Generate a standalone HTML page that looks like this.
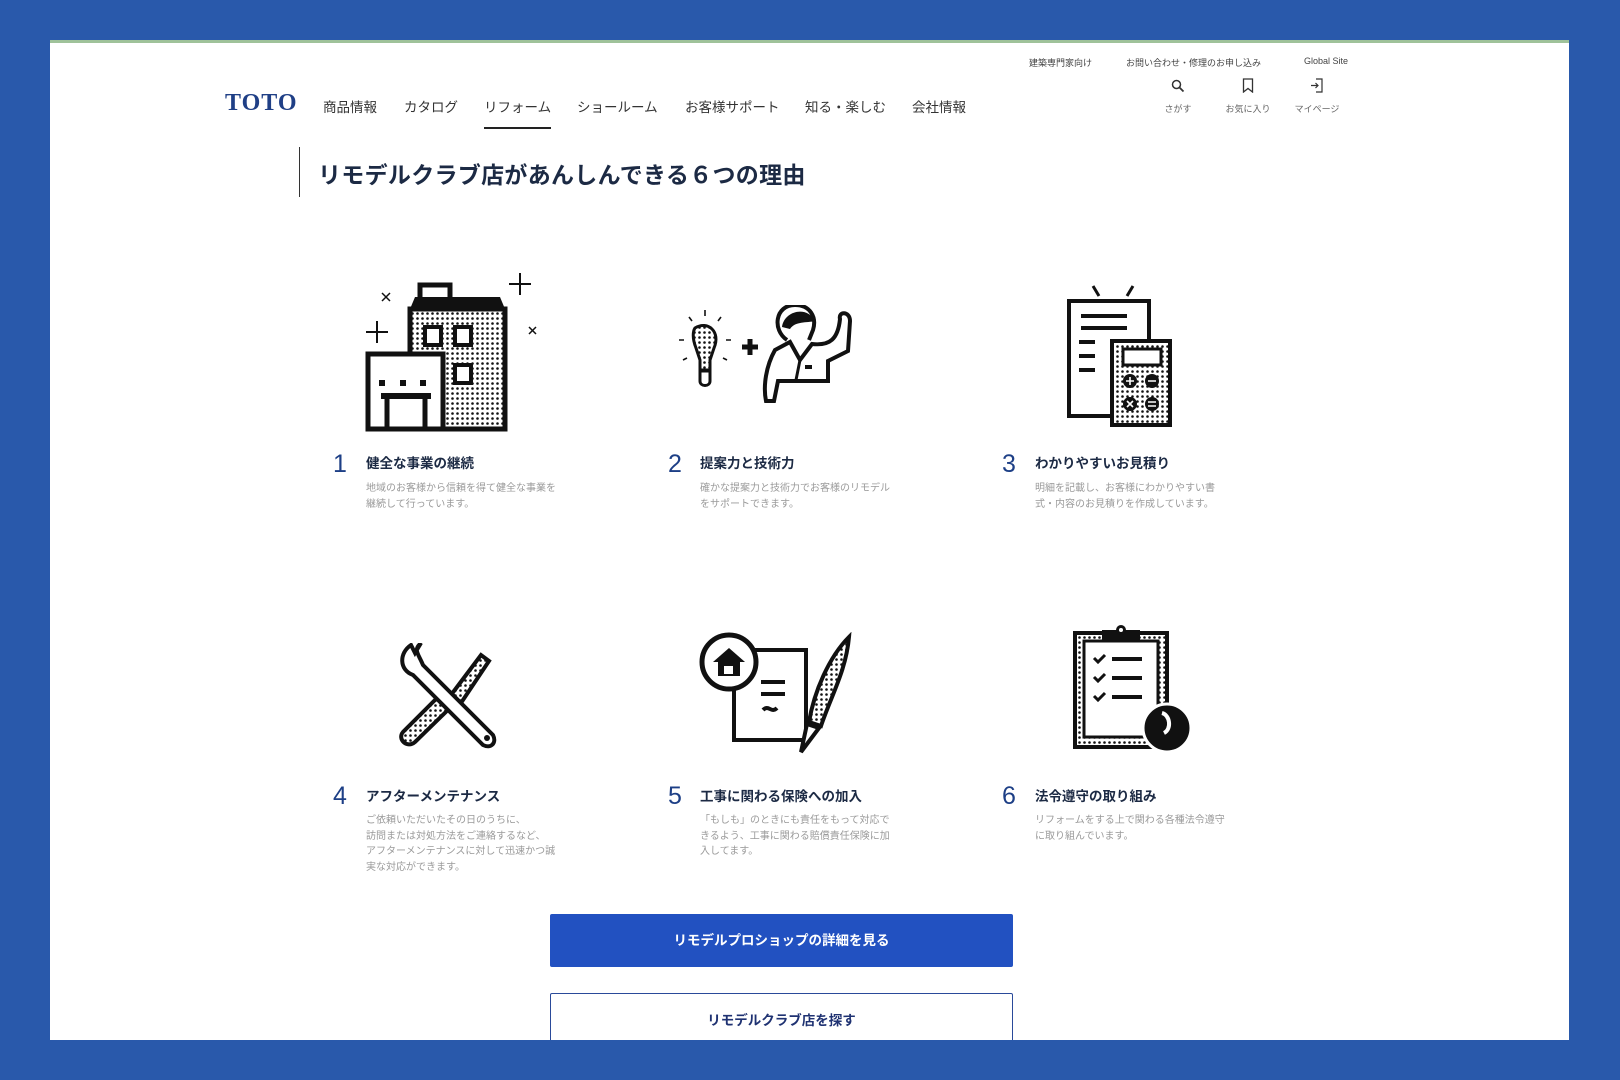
<!DOCTYPE html>
<html><head><meta charset="utf-8"><style>
*{margin:0;padding:0;box-sizing:border-box}
body{width:1620px;height:1080px;background:#2959ab;position:relative;overflow:hidden;font-family:"Liberation Sans","Noto Sans CJK JP",sans-serif;color:#222}
#panel{position:absolute;left:50px;top:40px;width:1519px;height:1000px;background:#fff;border-top:3px solid #9fc29a;overflow:hidden}
.a{position:absolute;white-space:nowrap}
.util{font-size:9px;color:#444;top:13px}
.nav{font-size:13.5px;color:#333;top:53px}
.ic{font-size:9px;color:#666;top:59px;transform:translateX(-50%)}
.num{font-size:25px;color:#1d3f86;font-weight:normal}
.h{font-size:13.5px;color:#1c2a44;font-weight:bold}
.d{font-size:10px;color:#9a9a9a;line-height:15.5px}
svg.i{position:absolute}
</style></head><body>
<div id="panel">
<div class="a util" style="left:979px">建築専門家向け</div>
<div class="a util" style="left:1076px">お問い合わせ・修理のお申し込み</div>
<div class="a util" style="left:1254px">Global Site</div>
<div class="a" style="left:175px;top:47px;font-family:'Liberation Serif',serif;font-weight:bold;font-size:24px;color:#1f3f86;letter-spacing:1px">TOTO</div>
<div class="a nav" style="left:273px">商品情報</div>
<div class="a nav" style="left:354px">カタログ</div>
<div class="a nav" style="left:434px">リフォーム</div>
<div style="position:absolute;left:434px;top:84px;width:67px;height:2px;background:#222"></div>
<div class="a nav" style="left:527px">ショールーム</div>
<div class="a nav" style="left:635px">お客様サポート</div>
<div class="a nav" style="left:755px">知る・楽しむ</div>
<div class="a nav" style="left:862px">会社情報</div>
<svg class="i" style="left:1121px;top:36px" width="14" height="14" viewBox="0 0 14 14"><circle cx="5.5" cy="5.5" r="4" fill="none" stroke="#333" stroke-width="1.5"/><path d="M8.5 8.5L12.5 12.5" stroke="#333" stroke-width="1.8"/></svg>
<svg class="i" style="left:1192px;top:35px" width="12" height="15" viewBox="0 0 12 15"><path d="M1.5 1h9v13L6 10.5 1.5 14z" fill="none" stroke="#333" stroke-width="1.3"/></svg>
<svg class="i" style="left:1260px;top:35px" width="14" height="15" viewBox="0 0 14 15"><path d="M6 1h6v13H6M1 7.5h7M5.5 5l2.5 2.5-2.5 2.5" fill="none" stroke="#333" stroke-width="1.2"/></svg>
<div class="a ic" style="left:1128px">さがす</div>
<div class="a ic" style="left:1198px">お気に入り</div>
<div class="a ic" style="left:1267px">マイページ</div>
<div style="position:absolute;left:249px;top:104px;width:1px;height:50px;background:#333"></div>
<div class="a" style="left:268px;top:113px;font-size:23px;letter-spacing:0.3px;font-weight:bold;color:#1c2a44">リモデルクラブ店があんしんできる６つの理由</div>

<svg width="0" height="0" style="position:absolute"><defs><pattern id="dt" width="5" height="5" patternUnits="userSpaceOnUse"><rect width="5" height="5" fill="#fff"/><circle cx="2.5" cy="2.5" r="1.3" fill="#111"/></pattern></defs></svg>

<!-- icon1 building -->
<svg class="i" style="left:315px;top:228px" width="185" height="162" viewBox="0 0 185 162">
<path d="M55 14h30v24h-30z" fill="none" stroke="#111" stroke-width="5"/>
<path d="M45 38l5-12h85l5 12z" fill="#111"/>
<rect x="45" y="38" width="95" height="120" fill="url(#dt)" stroke="#111" stroke-width="5"/>
<rect x="60" y="56" width="16" height="18" fill="#fff" stroke="#111" stroke-width="4"/>
<rect x="90" y="56" width="16" height="18" fill="#fff" stroke="#111" stroke-width="4"/>
<rect x="90" y="94" width="16" height="18" fill="#fff" stroke="#111" stroke-width="4"/>
<rect x="3" y="83" width="75" height="75" fill="#fff" stroke="#111" stroke-width="5"/>
<path d="M14 112h6M35 112h6M55 112h6" stroke="#111" stroke-width="6"/>
<path d="M16 125h50" stroke="#111" stroke-width="6"/><path d="M22 125v33M60 125v33" stroke="#111" stroke-width="5"/>
<path d="M155 2v22M144 13h22M12 50v22M1 61h22" stroke="#111" stroke-width="2"/>
<path d="M17 22l8 8M25 22l-8 8M164 56l7 7M171 56l-7 7" stroke="#111" stroke-width="1.5"/>
</svg>
<!-- icon2 -->
<svg class="i" style="left:627px;top:262px" width="185" height="115" viewBox="0 0 185 115">
<path d="M18 23c13-8 26 4 19 20l-4 12v10h-10v-10l-4-12c-4-10 -3-17 -1-20z" fill="url(#dt)" stroke="#111" stroke-width="3"/>
<path d="M23 66h10v10c0 6-10 6-10 0z" fill="#fff" stroke="#111" stroke-width="3"/>
<path d="M28 5v6M12 12l3 4M44 12l-3 4M2 35h5M49 35h5M6 55l4-2M50 55l-4-2" stroke="#111" stroke-width="1.6"/>
<path d="M65 42h16M73 34v16" stroke="#111" stroke-width="5"/>
<path d="M110 35c-15 -10 -12-35 8-35 15 0 22 12 18 25l-4 10" fill="#fff" stroke="#111" stroke-width="4"/>
<path d="M105 22c2-16 25-22 33-6c-8 2-20 0-25 8z" fill="#111"/>
<path d="M98 45l15-8 10 18 12-16c18 2 26-5 28-25-2-8 10-8 10 2l-2 30-20 10v20h-50l-4 20-8 0c-3-15 0-35 9-51z" fill="#fff" stroke="#111" stroke-width="4"/>
<path d="M113 37l10 18-4 20" fill="none" stroke="#111" stroke-width="3"/><rect x="128" y="60" width="7" height="4" fill="#111"/>
</svg>
<!-- icon3 -->
<svg class="i" style="left:1015px;top:241px" width="110" height="145" viewBox="0 0 110 145">
<path d="M28 2l6 10M68 2l-6 10" stroke="#111" stroke-width="3"/>
<rect x="4" y="17" width="80" height="115" fill="#fff" stroke="#111" stroke-width="4"/>
<path d="M16 32h46M16 44h46M14 58h16M14 72h16M14 86h16" stroke="#111" stroke-width="4"/>
<rect x="47" y="57" width="58" height="84" fill="url(#dt)" stroke="#111" stroke-width="4"/>
<rect x="58" y="65" width="38" height="16" fill="#fff" stroke="#111" stroke-width="3"/>
<circle cx="65" cy="97" r="7" fill="#111"/><circle cx="87" cy="97" r="7" fill="#111"/><circle cx="65" cy="120" r="7" fill="#111"/><circle cx="87" cy="120" r="7" fill="#111"/>
<path d="M61 97h8M65 93v8M83 97h8M62 117l6 6M68 117l-6 6M83 118h8M83 122h8" stroke="#fff" stroke-width="1.6"/>
</svg>

<div class="a num" style="left:283px;top:407px">1</div>
<div class="a h" style="left:316px;top:409px">健全な事業の継続</div>
<div class="a d" style="left:316px;top:438px">地域のお客様から信頼を得て健全な事業を<br>継続して行っています。</div>
<div class="a num" style="left:618px;top:407px">2</div>
<div class="a h" style="left:650px;top:409px">提案力と技術力</div>
<div class="a d" style="left:650px;top:438px">確かな提案力と技術力でお客様のリモデル<br>をサポートできます。</div>
<div class="a num" style="left:952px;top:407px">3</div>
<div class="a h" style="left:985px;top:409px">わかりやすいお見積り</div>
<div class="a d" style="left:985px;top:438px">明細を記載し、お客様にわかりやすい書<br>式・内容のお見積りを作成しています。</div>

<!-- icon4 -->
<svg class="i" style="left:343px;top:600px" width="108" height="106" viewBox="0 0 108 106">
<path d="M60 62L22 99c-8 7-18-3-12-10l38-38z" fill="url(#dt)" stroke="#111" stroke-width="4"/>
<path d="M58 52l30-40 8 6-28 42z" fill="url(#dt)" stroke="#111" stroke-width="4"/>
<path d="M18 2c-12 8-12 25 2 30l70 70c8 4 14-2 10-10L30 22c-5-12-10-15-2-22l-6 10z" fill="#fff" stroke="#111" stroke-width="4"/>
<circle cx="94" cy="95" r="3" fill="#111"/>
</svg>
<!-- icon5 -->
<svg class="i" style="left:649px;top:589px" width="155" height="126" viewBox="0 0 155 126">
<rect x="35" y="18" width="72" height="90" fill="#fff" stroke="#111" stroke-width="4"/>
<path d="M62 50h24M62 62h24M64 78c6-6 8 4 14-2" fill="none" stroke="#111" stroke-width="4"/>
<circle cx="30" cy="30" r="27" fill="#fff" stroke="#111" stroke-width="5"/>
<path d="M14 30l16-14 16 14z" fill="#111"/><rect x="19" y="29" width="22" height="15" fill="#111"/><rect x="25" y="34" width="9" height="8" fill="#fff"/>
<path d="M150 5c-20 20-35 55-40 85l12 4c10-30 25-55 28-89z" fill="url(#dt)" stroke="#111" stroke-width="4"/>
<path d="M108 92l-6 28 18-24z" fill="#fff" stroke="#111" stroke-width="4"/>
</svg>
<!-- icon6 -->
<svg class="i" style="left:1022px;top:582px" width="120" height="130" viewBox="0 0 120 130">
<rect x="3" y="8" width="92" height="114" fill="url(#dt)" stroke="#111" stroke-width="4"/>
<rect x="12" y="16" width="74" height="96" fill="#fff" stroke="#111" stroke-width="3"/>
<rect x="30" y="5" width="38" height="10" fill="#111"/><circle cx="49" cy="5" r="5" fill="#111"/><circle cx="49" cy="5" r="2" fill="#fff"/>
<path d="M22 33l4 4 7-7M22 52l4 4 7-7M22 71l4 4 7-7" fill="none" stroke="#111" stroke-width="3"/>
<path d="M40 34h30M40 53h30M40 72h30" stroke="#111" stroke-width="4"/>
<circle cx="95" cy="103" r="24" fill="#111" stroke="#fff" stroke-width="3"/>
<path d="M90 88c8 2 10 16 2 20" fill="none" stroke="#fff" stroke-width="4"/>
</svg>

<div class="a num" style="left:283px;top:739px">4</div>
<div class="a h" style="left:316px;top:742px">アフターメンテナンス</div>
<div class="a d" style="left:316px;top:770px">ご依頼いただいたその日のうちに、<br>訪問または対処方法をご連絡するなど、<br>アフターメンテナンスに対して迅速かつ誠<br>実な対応ができます。</div>
<div class="a num" style="left:618px;top:739px">5</div>
<div class="a h" style="left:650px;top:742px">工事に関わる保険への加入</div>
<div class="a d" style="left:650px;top:770px">「もしも」のときにも責任をもって対応で<br>きるよう、工事に関わる賠償責任保険に加<br>入してます。</div>
<div class="a num" style="left:952px;top:739px">6</div>
<div class="a h" style="left:985px;top:742px">法令遵守の取り組み</div>
<div class="a d" style="left:985px;top:770px">リフォームをする上で関わる各種法令遵守<br>に取り組んでいます。</div>

<div style="position:absolute;left:500px;top:871px;width:463px;height:53px;background:#2251c1;border-radius:2px;color:#fff;font-weight:bold;font-size:13.5px;text-align:center;line-height:53px">リモデルプロショップの詳細を見る</div>
<div style="position:absolute;left:500px;top:950px;width:463px;height:60px;border:1px solid #2a4a9a;border-radius:2px;color:#1f3272;font-weight:bold;font-size:13.5px;text-align:center;padding-top:15px">リモデルクラブ店を探す</div>
</div>
</body></html>
